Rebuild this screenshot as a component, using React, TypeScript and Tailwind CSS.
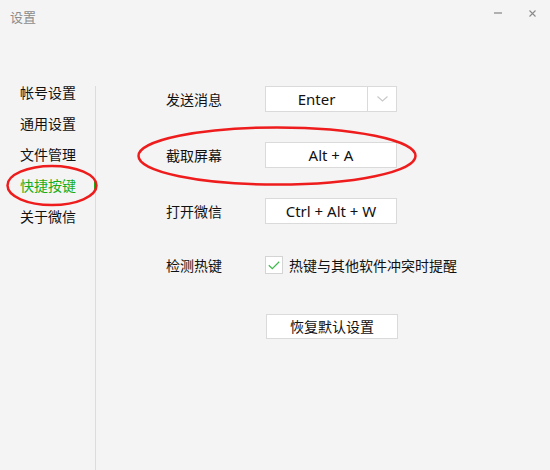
import React from "react";

const navItems = ["帐号设置", "通用设置", "文件管理", "快捷按键", "关于微信"];

function KeyBox({ text }: { text: string }) {
  return (
    <div className="w-[132px] h-[26px] bg-white border border-[#dadada] flex items-center justify-center text-[15px] text-[#111]">
      {text}
    </div>
  );
}

export default function App() {
  return (
    <div
      className="relative w-[550px] h-[470px] bg-[#f4f4f4] overflow-hidden"
      style={{ fontFamily: '"Noto Sans", "Noto Sans CJK SC", sans-serif' }}
    >
      {/* title bar */}
      <div className="absolute left-0 top-0 w-full h-[30px] flex items-start">
        <div className="pl-[10px] pt-[8px] text-[13px] leading-[18px] text-[#8c8c8c]">设置</div>
        <div className="ml-auto flex items-start pt-[10px] pr-[14px] gap-[27px]">
          <div className="w-[8px] h-[2px] mt-[2px] bg-[#b0b0b0]" />
          <svg width="7" height="7" viewBox="0 0 7 7" className="-mt-[0px]">
            <path d="M0.5 0.5 L6.5 6.5 M6.5 0.5 L0.5 6.5" stroke="#8a8a8a" strokeWidth="1.1" />
          </svg>
        </div>
      </div>

      <div className="flex h-full">
        {/* nav */}
        <div className="w-[95px] pt-[77px] flex flex-col">
          {navItems.map((n, i) => (
            <div
              key={n}
              className={`relative h-[31px] leading-[31px] pl-[20px] text-[14px] ${
                i === 3 ? "text-[#1aad19]" : "text-[#111]"
              }`}
            >
              {n}
              {i === 3 && <div className="absolute right-[-1px] top-[10px] w-[2px] h-[11px] bg-[#1aad19]" />}
            </div>
          ))}
        </div>
        <div className="w-px bg-[#dcdcdc] mt-[86px]" />

        {/* content */}
        <div className="flex-1 pl-[70px] pt-[86px] flex flex-col text-[14px] text-[#111]">
          <div className="flex items-center h-[26px]">
            <div className="w-[99px]">发送消息</div>
            <div className="w-[132px] h-[26px] bg-white border border-[#dadada] flex">
              <div className="w-[101px] flex items-center justify-center text-[15px]">Enter</div>
              <div className="flex-1 border-l border-[#dadada] flex items-center justify-center">
                <svg width="11" height="6" viewBox="0 0 11 6">
                  <path d="M0.5 0.5 L5.5 5 L10.5 0.5" fill="none" stroke="#c8c8c8" strokeWidth="1.1" />
                </svg>
              </div>
            </div>
          </div>

          <div className="flex items-center h-[26px] mt-[30px]">
            <div className="w-[99px]">截取屏幕</div>
            <KeyBox text="Alt + A" />
          </div>

          <div className="flex items-center h-[26px] mt-[30px]">
            <div className="w-[99px]">打开微信</div>
            <KeyBox text="Ctrl + Alt + W" />
          </div>

          <div className="flex items-center h-[26px] mt-[28px]">
            <div className="w-[99px]">检测热键</div>
            <div className="w-[18px] h-[18px] bg-white border border-[#d4d4d4] flex items-center justify-center">
              <svg width="12" height="9" viewBox="0 0 12 9">
                <path d="M0.8 4.2 L4.3 7.6 L11.2 0.8" fill="none" stroke="#3cb94a" strokeWidth="1.2" />
              </svg>
            </div>
            <div className="ml-[6px]">热键与其他软件冲突时提醒</div>
          </div>

          <div className="flex mt-[36px] pl-[100px]">
            <div className="w-[132px] h-[25px] bg-white border border-[#dadada] flex items-center justify-center">
              恢复默认设置
            </div>
          </div>
        </div>
      </div>

      {/* red annotation ellipses */}
      <svg className="absolute left-0 top-0 pointer-events-none" width="550" height="470">
        <ellipse cx="52" cy="185.5" rx="44.5" ry="19.5" fill="none" stroke="#ee1c1c" strokeWidth="2.5" />
        <ellipse cx="277" cy="156" rx="138.5" ry="28.5" fill="none" stroke="#ee1c1c" strokeWidth="2.5" />
      </svg>
    </div>
  );
}
